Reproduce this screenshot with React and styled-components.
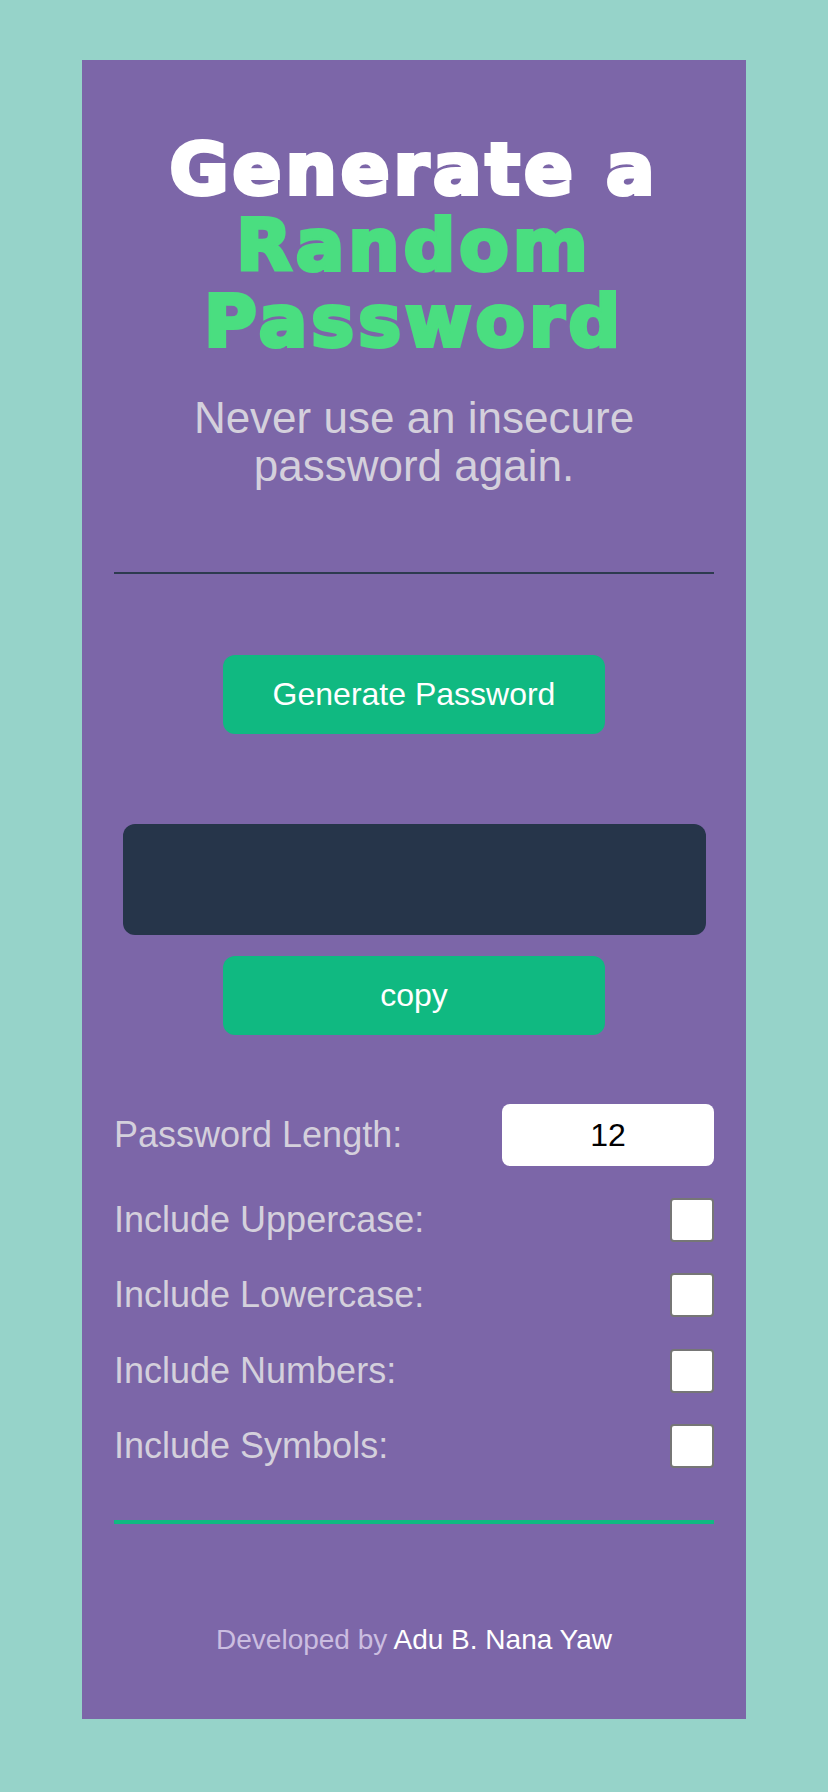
import React from "react";
import styled, { createGlobalStyle } from "styled-components";

const GlobalStyle = createGlobalStyle`
  html, body {
    margin: 0;
    padding: 0;
    background: #96d3c9;
    font-family: "Liberation Sans", Arial, sans-serif;
  }
  * { box-sizing: border-box; }
`;

const Page = styled.div`
  padding: 60px 0 74px;
`;

const Card = styled.main`
  width: 664px;
  margin: 0 auto;
  background: #7c66a8;
  padding: 71px 32px 63px;
  display: flex;
  flex-direction: column;
`;

const Title = styled.h1`
  margin: 0;
  text-align: center;
  font-family: "DejaVu Sans", "Liberation Sans", sans-serif;
  font-weight: 700;
  font-size: 72px;
  line-height: 76px;
  letter-spacing: 4px;
  color: #ffffff;
  -webkit-text-stroke: 4px #ffffff;
  paint-order: stroke fill;
`;

const Accent = styled.span`
  color: #4ade80;
  -webkit-text-stroke: 4px #4ade80;
`;

const Subtitle = styled.p`
  margin: 35px 0 0;
  text-align: center;
  font-size: 44px;
  line-height: 48px;
  color: #d4d0dc;
`;

const Divider = styled.hr`
  margin: 82px 0 0;
  border: none;
  height: ${(p) => p.$thickness}px;
  background: ${(p) => p.$color};
`;

const Button = styled.button`
  display: block;
  margin: ${(p) => p.$top}px auto 0;
  width: 382px;
  height: 79px;
  border: none;
  border-radius: 12px;
  background: #10b981;
  color: #ffffff;
  font-family: "Liberation Sans", Arial, sans-serif;
  font-size: 32px;
  cursor: pointer;
`;

const Output = styled.div`
  margin: 90px auto 0;
  width: 583px;
  height: 111px;
  border-radius: 12px;
  background: #26354a;
`;

const Settings = styled.section`
  margin-top: 69px;
  display: flex;
  flex-direction: column;
  gap: 31.5px;
`;

const Row = styled.label`
  display: flex;
  align-items: center;
  justify-content: space-between;
`;

const Label = styled.span`
  font-size: 36px;
  color: #d4d0dc;
`;

const NumberInput = styled.input`
  width: 212px;
  height: 62px;
  border: none;
  border-radius: 8px;
  background: #ffffff;
  text-align: center;
  font-family: "Liberation Sans", Arial, sans-serif;
  font-size: 32px;
  color: #000000;
  outline: none;
  appearance: textfield;
  -moz-appearance: textfield;
  &::-webkit-inner-spin-button,
  &::-webkit-outer-spin-button {
    -webkit-appearance: none;
    margin: 0;
  }
`;

const Check = styled.input`
  appearance: none;
  -webkit-appearance: none;
  margin: 0;
  width: 44px;
  height: 44px;
  border: 2px solid #767676;
  border-radius: 4px;
  background: #ffffff;
`;

const GreenLine = styled.hr`
  margin: 52px 0 0;
  border: none;
  height: 4px;
  background: #10b981;
`;

const Footer = styled.footer`
  margin-top: 100px;
  text-align: center;
  font-size: 28px;
  line-height: 32px;
  color: #cbbde0;
`;

const Author = styled.span`
  color: #ffffff;
`;

const options = [
  "Include Uppercase:",
  "Include Lowercase:",
  "Include Numbers:",
  "Include Symbols:",
];

export default function App() {
  return (
    <>
      <GlobalStyle />
      <Page>
        <Card>
          <Title>
            Generate a <Accent>Random Password</Accent>
          </Title>
          <Subtitle>Never use an insecure password again.</Subtitle>
          <Divider $thickness={2} $color="#2d3a4f" />
          <Button $top={81}>Generate Password</Button>
          <Output />
          <Button $top={21}>copy</Button>
          <Settings>
            <Row>
              <Label>Password Length:</Label>
              <NumberInput type="number" defaultValue={12} />
            </Row>
            {options.map((o) => (
              <Row key={o}>
                <Label>{o}</Label>
                <Check type="checkbox" />
              </Row>
            ))}
          </Settings>
          <GreenLine />
          <Footer>
            Developed by <Author>Adu B. Nana Yaw</Author>
          </Footer>
        </Card>
      </Page>
    </>
  );
}
